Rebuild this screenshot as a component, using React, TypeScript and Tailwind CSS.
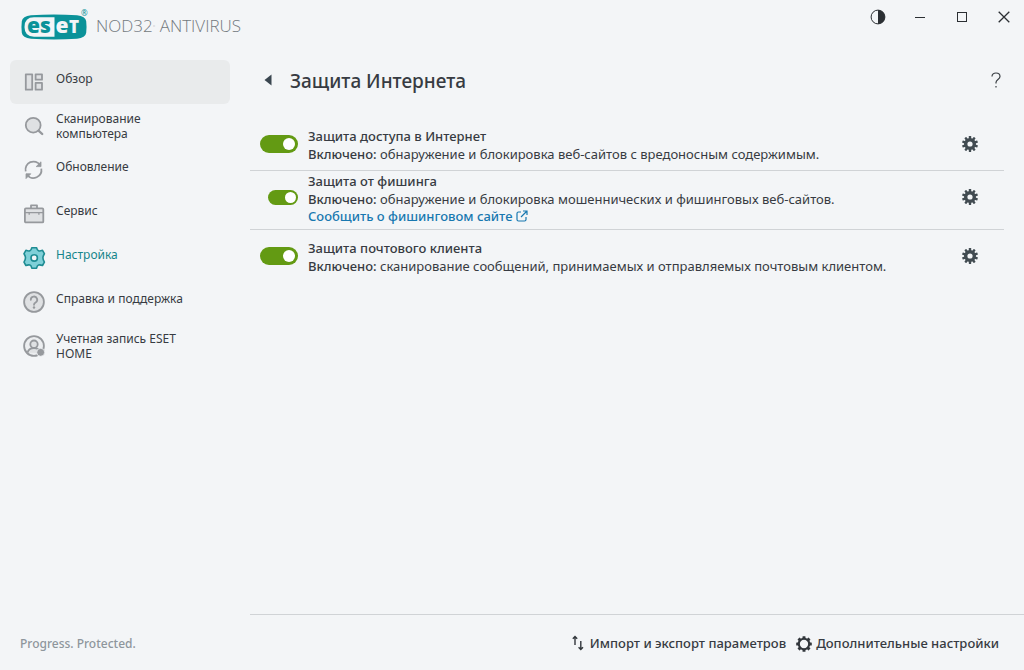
import type { ReactNode } from "react";

const solidTeeth = [0, 36, 72, 108, 144, 180, 216, 252, 288, 324];
const outlineTeeth = [0, 45, 90, 135, 180, 225, 270, 315];

function SolidGear() {
  return (
    <svg viewBox="0 0 16 16" className="size-4" aria-hidden="true">
      <g fill="#414b51">
        {solidTeeth.map((angle) => (
          <rect
            key={angle}
            x="6.8"
            y="0"
            width="2.4"
            height="4"
            rx="0.4"
            transform={`rotate(${angle} 8 8)`}
          />
        ))}
      </g>
      <circle cx="8" cy="8" r="4.3" fill="none" stroke="#414b51" strokeWidth="3.4" />
    </svg>
  );
}

function OutlineGear() {
  return (
    <svg viewBox="0 0 16 16" className="size-4" aria-hidden="true">
      <g fill="#32373c">
        {outlineTeeth.map((angle) => (
          <rect
            key={angle}
            x="6.5"
            y="0.2"
            width="3"
            height="3"
            rx="0.5"
            transform={`rotate(${angle} 8 8)`}
          />
        ))}
      </g>
      <circle cx="8" cy="8" r="5.2" fill="none" stroke="#32373c" strokeWidth="2.1" />
    </svg>
  );
}

function NavIcon({ children }: { children: ReactNode }) {
  return (
    <svg
      viewBox="0 0 24 24"
      className="size-6 shrink-0"
      fill="#dfe1e3"
      stroke="#96999d"
      strokeWidth="1.8"
      strokeLinejoin="round"
      aria-hidden="true"
    >
      {children}
    </svg>
  );
}

const navItems = [
  {
    label: "Обзор",
    current: true,
    icon: (
      <NavIcon>
        <rect x="3.8" y="4.3" width="6.4" height="15.4" />
        <rect x="13.6" y="4.3" width="6.4" height="5.4" />
        <rect x="13.6" y="12.9" width="6.4" height="6.8" />
      </NavIcon>
    ),
  },
  {
    label: "Сканирование компьютера",
    icon: (
      <NavIcon>
        <circle cx="11.2" cy="11.2" r="7.4" />
        <path d="m16.8 16.8 3.4 3.2" strokeWidth="2.4" strokeLinecap="round" />
      </NavIcon>
    ),
  },
  {
    label: "Обновление",
    icon: (
      <NavIcon>
        <g fill="none">
          <path d="M3.7 13.4A8 8 0 0 1 18.2 7.2" />
          <path d="M19.3 10.6A8 8 0 0 1 5.2 17" />
        </g>
        <path d="M19 3.8v4.8h-4.8z" fill="#96999d" strokeWidth="0.8" />
        <path d="M4 20.6v-4.8h4.8z" fill="#96999d" strokeWidth="0.8" />
      </NavIcon>
    ),
  },
  {
    label: "Сервис",
    icon: (
      <NavIcon>
        <path d="M9 6.5V3.4h6v3.1" fill="none" />
        <rect x="2.9" y="6.4" width="18.4" height="14" rx="1" />
        <path d="M2.9 10.7h18.4M7.2 10.7v2M16.9 10.7v2" fill="none" strokeWidth="1.3" />
      </NavIcon>
    ),
  },
  {
    label: "Настройка",
    active: true,
    icon: (
      <svg
        viewBox="0 0 24 24"
        className="size-6 shrink-0"
        fill="#7fd0d8"
        stroke="#1e8c93"
        strokeWidth="1.6"
        strokeLinejoin="round"
        aria-hidden="true"
      >
        <path d="M9.8 1.7h4.8q.5 2.6 1.9 3.1t4-.5l1.900 3.400q-1.500 2.300-1.500 4.100t1.500 4.300l-1.900 3.400q-2.600-.900-4-.400t-1.900 3.100h-4.800q-.500-2.600-1.900-3.100t-4 .400L2 16.100q1.500-2.500 1.500-4.300T2 7.700l1.900-3.400q2.600 1 4 .500t1.900-3.100z" />
        <circle cx="12.200" cy="11.900" r="3.200" fill="#f3f5f7" />
      </svg>
    ),
  },
  {
    label: "Справка и поддержка",
    icon: (
      <NavIcon>
        <circle cx="12" cy="12" r="9.9" />
        <path
          d="M8.800 9.800a3.200 3.200 0 1 1 4.800 2.700c-1.100.600-1.600 1.100-1.600 2.300"
          fill="none"
          strokeLinecap="round"
        />
        <circle cx="12" cy="17.5" r="1.2" fill="#96999d" stroke="none" />
      </NavIcon>
    ),
  },
  {
    label: "Учетная запись ESET HOME",
    icon: (
      <NavIcon>
        <circle cx="12" cy="12" r="9.9" fill="#eceef0" />
        <path d="M5.500 18.800c.700-3.200 3-4.600 6.500-4.600s5.800 1.400 6.500 4.600" />
        <circle cx="12" cy="10.2" r="3.7" />
        <circle cx="18.7" cy="18.3" r="4" fill="#96999d" stroke="#f3f5f7" strokeWidth="0.8" />
      </NavIcon>
    ),
  },
];

function Logo() {
  return (
    <svg viewBox="0 0 68 32" className="h-8 w-17" role="img" aria-label="ESET">
      <path
        d="M10 7.200Q33 6 56 7.200q8.500.800 9.200 6 .700 5.800 0 11.600-.700 5.200-9.200 6-23 1.200-46 0-8.500-.800-9.200-6-.700-5.800 0-11.600.700-5.200 9.200-6z"
        fill="#0b9299"
      />
      <path d="M33.500 9.300H13Q3.500 9.300 3.500 19T13 28.700h20.500z" fill="#f3f5f7" />
      <g fontFamily="Noto Sans" fontWeight="900" fontSize="21">
        <text x="6" y="25" fill="#0b9299">es</text>
        <text x="34.500" y="25" fill="#f3f5f7">e</text>
        <text x="48" y="25" fontSize="17" fill="#f3f5f7">T</text>
      </g>
      <text x="60" y="8" fontFamily="Noto Sans" fontSize="8" fill="#0b9299">®</text>
    </svg>
  );
}

function Sidebar() {
  return (
    <aside className="flex w-[250px] shrink-0 flex-col justify-between pl-2.5">
      <nav aria-label="Разделы">
        <ul>
          {navItems.map((item) => (
            <li key={item.label}>
              <a
                href="#"
                className={`flex h-11 w-[220px] items-center gap-2.5 rounded-md px-3 text-xs leading-[15px] ${
                  item.current ? "bg-[#e9ebec]" : ""
                } ${item.active ? "text-[#16858b]" : "text-[#373b42]"}`}
              >
                {item.icon}
                <span className={item.label.length > 20 ? "w-32" : "pb-2"}>
                  {item.label}
                </span>
              </a>
            </li>
          ))}
        </ul>
      </nav>
      <p className="px-2.5 pb-4.5 text-xs font-medium text-[#8e969c]">
        Progress. Protected.
      </p>
    </aside>
  );
}

const protections = [
  {
    id: "web-access",
    title: "Защита доступа в Интернет",
    text: "обнаружение и блокировка веб-сайтов с вредоносным содержимым.",
    row: "pt-2 pb-[7px]",
    small: false,
  },
  {
    id: "phishing",
    title: "Защита от фишинга",
    text: "обнаружение и блокировка мошеннических и фишинговых веб-сайтов.",
    link: "Сообщить о фишинговом сайте",
    row: "pt-px pb-[5px]",
    small: true,
  },
  {
    id: "mail-client",
    title: "Защита почтового клиента",
    text: "сканирование сообщений, принимаемых и отправляемых почтовым клиентом.",
    row: "py-[9px]",
    small: false,
  },
];

export default function App() {
  return (
    <div className="flex min-h-screen flex-col bg-[#f3f5f7] font-['Noto_Sans','Open_Sans',sans-serif] text-[#373b42]">
      <header className="flex h-15 items-start justify-between">
        <div className="flex items-center gap-[7px] pt-2 pl-[21px]">
          <Logo />
          <span className="pt-1 font-['Open_Sans',sans-serif] text-[17px] leading-6 font-light text-[#747a80]">
            NOD32<sup className="text-[6px]">°</sup> ANTIVIRUS
          </span>
        </div>
        <div className="flex items-center gap-[18px] pt-[5px] pr-2">
          <button type="button" aria-label="Тема" className="grid size-6 place-items-center">
            <svg viewBox="0 0 16 16" className="size-4">
              <circle cx="8" cy="8" r="6.9" fill="none" stroke="#2b2f33" />
              <path d="M8 1a7 7 0 0 1 0 14z" fill="#2b2f33" />
            </svg>
          </button>
          <button type="button" aria-label="Свернуть" className="grid size-6 place-items-center">
            <svg viewBox="0 0 12 12" className="size-3" stroke="#2b2f33">
              <path d="M1 6.500h10" />
            </svg>
          </button>
          <button type="button" aria-label="Развернуть" className="grid size-6 place-items-center">
            <svg viewBox="0 0 12 12" className="size-3" stroke="#2b2f33" fill="none">
              <rect x="1.5" y="1.5" width="9" height="9" />
            </svg>
          </button>
          <button type="button" aria-label="Закрыть" className="grid size-6 place-items-center">
            <svg viewBox="0 0 12 12" className="size-3" stroke="#2b2f33" strokeWidth="1.3">
              <path d="m.7.7 10.6 10.6M11.3.7.7 11.3" />
            </svg>
          </button>
        </div>
      </header>

      <div className="flex flex-1">
        <Sidebar />
        <div className="flex min-w-0 flex-1 flex-col">
          <main className="flex-1 pr-5">
            <div className="flex h-10 items-center">
              <button type="button" aria-label="Назад" className="ml-2 grid size-5 place-items-center">
                <svg viewBox="0 0 8 12" className="h-3 w-2">
                  <path d="M7.500.500v11L.500 6z" fill="#3a4650" />
                </svg>
              </button>
              <h1 className="flex-1 pt-0.5 pl-3 text-[19px] font-medium">Защита Интернета</h1>
              <button type="button" aria-label="Справка" className="grid w-4 place-items-center">
                <svg
                  viewBox="0 0 10 16"
                  className="h-4 w-2.5"
                  fill="none"
                  stroke="#3a3f44"
                  strokeWidth="1.2"
                >
                  <path d="M1 4.500C1 2.200 2.700 1 5 1s4 1.300 4 3.400C9 7.500 5 7.600 5 10.500v1" />
                  <path d="M5 14v1.500" />
                </svg>
              </button>
            </div>

            <ul className="pt-[19px]">
              {protections.map((item) => (
                <li
                  key={item.id}
                  className={`flex items-center border-[#d0d3d6] not-last:border-b ${item.row}`}
                >
                  <div className="flex w-12 shrink-0 justify-end pb-0.5">
                    <input
                      id={item.id}
                      type="checkbox"
                      role="switch"
                      defaultChecked
                      className={`appearance-none rounded-full bg-gray-400 before:block before:rounded-full before:bg-white checked:bg-[#639a13] ${
                        item.small
                          ? "h-[15px] w-[30px] p-0.5 before:size-[11px] checked:before:ml-auto"
                          : "h-[18px] w-[38px] p-[3px] before:size-3 checked:before:ml-auto"
                      }`}
                    />
                  </div>
                  <div className="min-w-0 flex-1 pl-2.5 text-[13px] leading-[18px]">
                    <label htmlFor={item.id} className="block font-medium">
                      {item.title}
                    </label>
                    <p>
                      <span className="font-medium">Включено:</span> {item.text}
                    </p>
                    {item.link && (
                      <a href="#" className="flex items-center gap-1 leading-4 font-medium text-[#1878b0]">
                        {item.link}
                        <svg
                          viewBox="0 0 12 12"
                          className="size-3"
                          fill="none"
                          stroke="currentColor"
                          strokeWidth="1.2"
                          aria-hidden="true"
                        >
                          <path d="M5 2H2.500Q1 2 1 3.500v6Q1 11 2.500 11h6q1.500 0 1.500-1.500V7M7 1h4v4M11 1 5 7" />
                        </svg>
                      </a>
                    )}
                  </div>
                  <button
                    type="button"
                    aria-label={`Настроить: ${item.title}`}
                    className="mr-[26px] pb-[3px]"
                  >
                    <SolidGear />
                  </button>
                </li>
              ))}
            </ul>
          </main>

          <footer className="flex h-14 items-center justify-end gap-2.5 border-t border-[#d0d3d6] pt-0.5 pr-[25px] text-[13px] font-medium">
            <button type="button" className="flex items-center gap-1.5">
              <svg
                viewBox="0 0 12 16"
                className="mb-0.5 h-4 w-3"
                fill="none"
                stroke="#32373c"
                strokeWidth="1.4"
                aria-hidden="true"
              >
                <path d="M3 10V1.500M.800 3.700 3 1.500l2.200 2.200M8.800 6v8.500M6.600 12.300l2.200 2.200 2.200-2.200" />
              </svg>
              Импорт и экспорт параметров
            </button>
            <button type="button" className="flex items-center gap-1">
              <OutlineGear />
              Дополнительные настройки
            </button>
          </footer>
        </div>
      </div>
    </div>
  );
}
